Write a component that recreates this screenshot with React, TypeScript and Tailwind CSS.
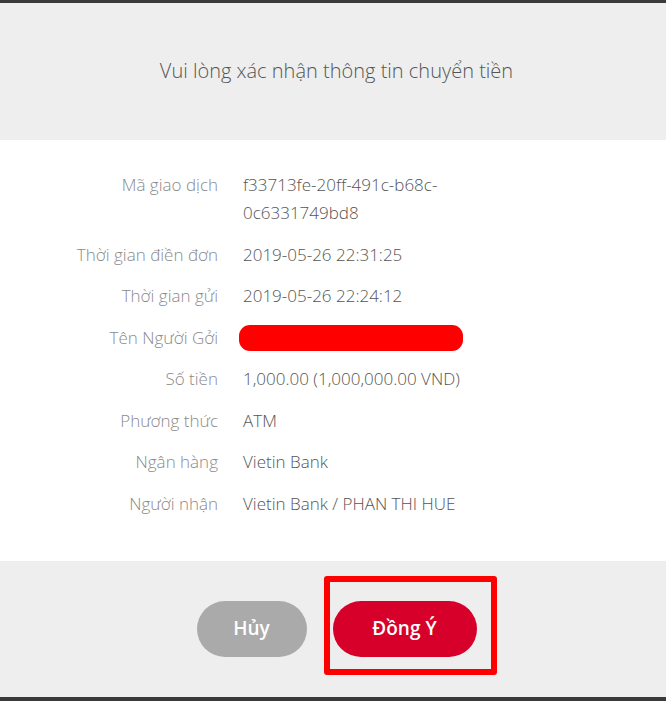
import React from 'react';

type Row = { label: string; value: React.ReactNode };

const rows: Row[] = [
  {
    label: 'Mã giao dịch',
    value: (
      <>
        f33713fe-20ff-491c-b68c-
        <br />
        0c6331749bd8
      </>
    ),
  },
  { label: 'Thời gian điền đơn', value: '2019-05-26 22:31:25' },
  { label: 'Thời gian gửi', value: '2019-05-26 22:24:12' },
  {
    label: 'Tên Người Gởi',
    value: (
      <div className="h-7 flex items-center">
        <div className="-ml-[4px] h-[26px] w-[224px] rounded-[11px] bg-[#ff0000]" />
      </div>
    ),
  },
  { label: 'Số tiền', value: '1,000.00 (1,000,000.00 VND)' },
  { label: 'Phương thức', value: 'ATM' },
  { label: 'Ngân hàng', value: 'Vietin Bank' },
  { label: 'Người nhận', value: 'Vietin Bank / PHAN THI HUE' },
];

export default function App() {
  return (
    <div
      className="w-[666px] h-[701px] flex flex-col bg-white overflow-hidden"
      style={{ fontFamily: '"Open Sans", "Noto Sans", sans-serif' }}
    >
      <div className="h-[3px] bg-[#3a3a3a]" />

      <div className="h-[137px] bg-[#eeeeee] flex items-center justify-center">
        <h1 className="text-[20px] font-light text-[#555555] pb-[1px] pl-[7px]">
          Vui lòng xác nhận thông tin chuyển tiền
        </h1>
      </div>

      <div className="h-[421px] bg-white pt-[31px]">
        <div className="grid grid-cols-[218px_1fr] gap-x-[25px] gap-y-[13.5px] text-[17px] leading-7 font-light">
          {rows.map((row) => (
            <React.Fragment key={row.label}>
              <div className="text-right text-[#8a8a8a]">{row.label}</div>
              <div className="text-[#555555]">{row.value}</div>
            </React.Fragment>
          ))}
        </div>
      </div>

      <div className="flex-1 bg-[#eeeeee] flex items-center justify-center pl-[7px] pb-[1px]">
        <div className="flex items-center gap-[26px]">
          <button className="h-[56px] w-[110px] rounded-full bg-[#aaaaaa] text-white text-[19px] font-semibold">
            Hủy
          </button>
          <div className="relative">
            <button className="h-[56px] w-[144px] rounded-full bg-[#d7002a] text-white text-[19px] font-semibold">
              Đồng Ý
            </button>
            <div className="absolute -left-[9px] -top-[25px] w-[173px] h-[99px] border-[6px] border-[#ff0000] rounded-[3px]" />
          </div>
        </div>
      </div>

      <div className="h-[4px] bg-[#3a3a3a]" />
    </div>
  );
}
